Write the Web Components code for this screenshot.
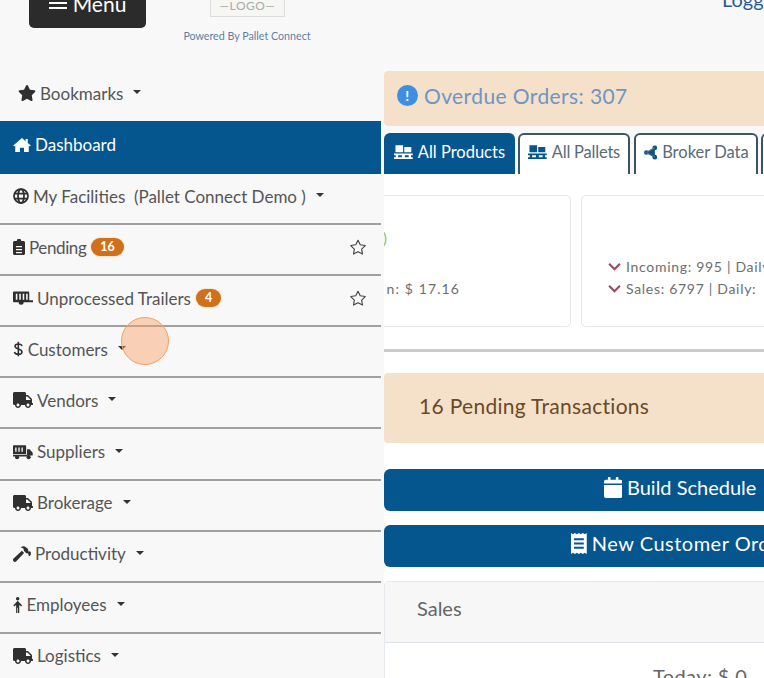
<!DOCTYPE html>
<html>
<head>
<meta charset="utf-8">
<title>Dashboard</title>
<style>
  html, body { margin: 0; height: 100%; overflow: hidden; background: #f8f8f9; }
  body { font-family: "Lato", "Open Sans", sans-serif; color: #555; }
</style>
</head>
<body>
<template id="icons">
  <svg data-i="star" viewBox="0 0 576 512"><path d="M259.3 17.8L194 150.2 47.9 171.5c-26.2 3.8-36.7 36.1-17.7 54.6l105.7 103-25 145.5c-4.5 26.3 23.2 46 46.4 33.7L288 439.6l130.7 68.7c23.2 12.2 50.9-7.4 46.4-33.7l-25-145.5 105.7-103c19-18.5 8.5-50.8-17.7-54.6L382 150.2 316.7 17.8c-11.7-23.6-45.6-23.9-57.4 0z"/></svg>
  <svg data-i="star-o" viewBox="0 0 576 512"><path fill="none" stroke="currentColor" stroke-width="36" stroke-linejoin="round" d="M288 40l72 146 161 23-116 113 27 160-144-76-144 76 27-160L55 209l161-23z"/></svg>
  <svg data-i="home" viewBox="0 0 576 512"><path d="M288 32L8 270l26 30 38-32v212h152V340h128v140h152V268l38 32 26-30-96-82V64h-70v74z"/></svg>
  <svg data-i="globe" viewBox="0 0 512 512"><circle cx="256" cy="256" r="224" fill="none" stroke="currentColor" stroke-width="56"/><ellipse cx="256" cy="256" rx="96" ry="224" fill="none" stroke="currentColor" stroke-width="56"/><path stroke="currentColor" stroke-width="56" d="M40 176h432M40 336h432"/></svg>
  <svg data-i="clipboard" viewBox="0 0 384 512"><path fill-rule="evenodd" d="M48 64h72a72 72 0 0 1 144 0h72c26 0 48 22 48 48v352c0 26-22 48-48 48H48c-26 0-48-22-48-48V112c0-26 22-48 48-48zM96 224v40h192v-40zm0 96v40h192v-40zm0 96v40h192v-40z"/></svg>
  <svg data-i="trailer" viewBox="0 0 640 512"><path fill-rule="evenodd" d="M40 48h440c22 0 40 18 40 40v240h120v64H340a80 80 0 0 1-160 0H40c-22 0-40-18-40-40V88c0-22 18-40 40-40zm50 70v190h50V118zm110 0v190h50V118zm110 0v190h50V118zm110 0v190h50V118z"/><circle cx="260" cy="396" r="52"/></svg>
  <svg data-i="dollar" viewBox="0 0 16 24"><path fill="none" stroke="currentColor" stroke-width="2.300" d="M13.500 7.500C13 5.500 11 4.500 8 4.500 5 4.500 3 6 3 8c0 5 10.500 3 10.500 8.500 0 2-2.200 3.500-5.500 3.500s-5.200-1.300-6-3.500M8 1v22"/></svg>
  <svg data-i="truck" viewBox="0 0 640 512"><path d="M624 352h-16V243.900c0-12.700-5.100-24.900-14.100-33.900L494 110.100c-9-9-21.200-14.100-33.900-14.100H416V48c0-26.500-21.500-48-48-48H48C21.500 0 0 21.500 0 48v320c0 26.500 21.500 48 48 48h16c0 53 43 96 96 96s96-43 96-96h128c0 53 43 96 96 96s96-43 96-96h48c8.800 0 16-7.200 16-16v-32c0-8.800-7.200-16-16-16zM160 464c-26.500 0-48-21.500-48-48s21.500-48 48-48 48 21.500 48 48-21.500 48-48 48zm320 0c-26.500 0-48-21.500-48-48s21.500-48 48-48 48 21.500 48 48-21.500 48-48 48zm80-208H416V144h44.100l99.900 99.900V256z"/></svg>
  <svg data-i="supplier" viewBox="0 0 640 512"><path fill-rule="evenodd" d="M30 40h360c17 0 30 13 30 30v250H0V70c0-17 13-30 30-30zm40 70v140h44V110zm100 0v140h44V110zm100 0v140h44V110z"/><path d="M450 170h80l100 110v90H450zM0 340h450v60H0z"/><circle cx="130" cy="420" r="66"/><circle cx="500" cy="420" r="66"/></svg>
  <svg data-i="hammer" viewBox="0 0 576 512"><path d="M571 196l-23-23c-6-6-16-6-22 0l-11 12-29-29c6-23 0-48-17-66l-46-46C373-7 298-7 250 40l91 46v37c0 17 7 33 19 45l50 50c18 18 43 23 66 17l29 29-12 11c-6 6-6 16 0 22l23 23c6 6 16 6 22 0l33-52c6-6 6-16 0-22zM285 155L19 403c-25 24-26 63-1 88s64 24 88-1l248-266-38-38c-16-16-27-38-31-31z"/></svg>
  <svg data-i="male" viewBox="0 0 300 512"><circle cx="150" cy="56" r="56"/><path d="M150 116L10 270l34 30 56-50v262h40V340h20v172h40V250l56 50 34-30z"/></svg>
  <svg data-i="pallet" viewBox="0 0 640 512"><path d="M50 10h260v240H50zM350 70h240v180H350z"/><path fill-rule="evenodd" d="M0 290h640v60h-60v70h60v60H0v-60h60v-70H0zm140 60v70h130v-70zm230 0v70h130v-70z"/></svg>
  <svg data-i="share" viewBox="0 0 448 512"><circle cx="368" cy="96" r="80"/><circle cx="80" cy="256" r="80"/><circle cx="368" cy="416" r="80"/><path stroke="currentColor" stroke-width="44" d="M368 96L80 256l288 160"/></svg>
  <svg data-i="calendar" viewBox="0 0 448 512"><path d="M0 192h448v272c0 26-22 48-48 48H48c-26 0-48-22-48-48zM400 64h-48V16c0-9-7-16-16-16h-32c-9 0-16 7-16 16v48H160V16c0-9-7-16-16-16h-32c-9 0-16 7-16 16v48H48C22 64 0 86 0 112v48h448v-48c0-26-22-48-48-48z"/></svg>
  <svg data-i="receipt" viewBox="0 0 384 512"><path fill-rule="evenodd" d="M0 0l48 32L96 0l48 32 48-32 48 32 48-32 48 32 48-32v512l-48-32-48 32-48-32-48 32-48-32-48 32-48-32-48 32zM72 130v44h240v-44zm0 104v44h240v-44zm0 104v44h240v-44z"/></svg>
  <svg data-i="chevron" viewBox="0 0 24 16"><path fill="none" stroke="currentColor" stroke-width="4" d="M2 3l10 10L22 3"/></svg>
</template>

<app-shell>
  <top-bar slot="top"></top-bar>
  <side-nav slot="side">
    <nav-item icon="star" label="Bookmarks" caret plain></nav-item>
    <nav-item icon="home" label="Dashboard" active></nav-item>
    <nav-item icon="globe" label="My Facilities&nbsp; (Pallet Connect Demo )" caret></nav-item>
    <nav-item icon="clipboard" label="Pending" badge="16" fav tight></nav-item>
    <nav-item icon="trailer" label="Unprocessed Trailers" badge="4" fav></nav-item>
    <nav-item icon="dollar" label="Customers" caret></nav-item>
    <nav-item icon="truck" label="Vendors" caret></nav-item>
    <nav-item icon="supplier" label="Suppliers" caret></nav-item>
    <nav-item icon="truck" label="Brokerage" caret></nav-item>
    <nav-item icon="hammer" label="Productivity" caret></nav-item>
    <nav-item icon="male" label="Employees" caret></nav-item>
    <nav-item icon="truck" label="Logistics" caret></nav-item>
  </side-nav>
  <dash-main slot="main"></dash-main>
</app-shell>

<script>
(function() {
    'use strict';

    var ICONS = document.getElementById('icons').content;
    var BLUE = '#05558f';

    function iconMarkup(name) {
        var svg = ICONS.querySelector('[data-i="' + name + '"]');
        return svg ? svg.outerHTML : '';
    }

    function define(tag, css, html) {
        customElements.define(tag, class extends HTMLElement {
            constructor() {
                super();
                this.attachShadow({ mode: 'open' });
            }
            connectedCallback() {
                var markup = typeof html === 'function' ? html(this) : html;
                this.shadowRoot.innerHTML = '<style>' + css + '</style>' + markup;
            }
        });
    }

    define('app-shell', [
        ':host { display: block; position: relative; width: 764px; height: 678px; overflow: hidden; background: #f8f8f9; }',
        '.top { height: 71px; display: flow-root; }',
        '.cols { display: grid; grid-template-columns: 384px 592px; }',
        '.spot { position: absolute; left: 121px; top: 317px; width: 48px; height: 48px; box-sizing: border-box;',
        '  border-radius: 50%; background: rgba(250,160,100,.45); border: 1.5px solid #f5a060; }'
    ].join('\n'), [
        '<div class="top"><slot name="top"></slot></div>',
        '<div class="cols"><slot name="side"></slot><slot name="main"></slot></div>',
        '<div class="spot"></div>'
    ].join(''));

    define('top-bar', [
        ':host { display: block; position: relative; height: 71px; margin-top: -22px; }',
        '.row { display: grid; grid-template-columns: 29px 117px 64px 75px 1fr auto; height: 50px; }',
        '.menu { grid-column: 2; display: flex; align-items: center; justify-content: center; gap: 6px; height: 50px;',
        '  background: #2b2b2b; color: #fff; border-radius: 5px; font-size: 21px; }',
        '.bars { width: 18px; height: 11px; border-top: 2px solid #fff; border-bottom: 2px solid #fff; position: relative; box-sizing: border-box; }',
        '.bars::after { content: ""; position: absolute; left: 0; right: 0; top: 2.5px; height: 2px; background: #fff; }',
        '.logo { grid-column: 4; height: 39px; box-sizing: border-box; border: 1px solid #dcdcd8; border-top: 0; background: #f6f6f3;',
        '  color: #aaa; font-size: 12px; letter-spacing: .5px; display: flex; align-items: flex-end; justify-content: center; padding-bottom: 3px; }',
        '.login { grid-column: 6; font-size: 20px; color: #2a5d93; margin-top: 9px; white-space: nowrap; width: 42px; overflow: hidden; }',
        '.powered { position: absolute; left: 170px; width: 154px; top: 51px; text-align: center; font-size: 10.700px; color: #5d7fa6; white-space: nowrap; }'
    ].join('\n'), [
        '<div class="row">',
        '<div class="menu"><span class="bars"></span><span>Menu</span></div>',
        '<div class="logo">\u2014LOGO\u2014</div>',
        '<div class="login">Logged</div>',
        '</div>',
        '<div class="powered">Powered By Pallet Connect</div>'
    ].join(''));

    define('side-nav', ':host { display: block; width: 381px; } ', '<slot></slot>');

    define('nav-item', [
        ':host { display: block; }',
        '.item { display: flex; align-items: center; height: 44.100px; padding: 0 14px 5px 13px;',
        '  color: #555; font-size: 17px; border-bottom: 2px solid #a0a0a0; white-space: nowrap; }',
        '.item svg { height: 16px; width: auto; fill: currentColor; margin-right: 4px; color: #2f2f2f; flex: none; }',
        '.caret { width: 0; height: 0; margin-left: 10px; margin-bottom: 2px; border: 4.500px solid transparent; border-top-color: #333; border-bottom: 0; }',
        '.badge { margin-left: 5px; background: #d0701c; color: #fff; font-size: 12.500px; font-weight: 700; line-height: 1; padding: 3px 9px; border-radius: 10px; box-shadow: 0 0 2px #f5c08a; }',
        '.fav { margin-left: auto; display: flex; }',
        '.fav svg { height: 16px; margin: 0; color: #444; }',
        '.tight { letter-spacing: -.4px; }',
        '.plain { border-bottom: 0; padding: 0 14px 6px 18px; height: 44px; }',
        '.active { background: ' + BLUE + '; color: #fff; height: 47px; padding-bottom: 6px; border-bottom: 0; }',
        '.active svg { color: #fff; }'
    ].join('\n'), function(el) {
        var cls = el.hasAttribute('plain') ? 'plain' : el.hasAttribute('active') ? 'active' : '';
        return '<div class="item ' + cls + '">' +
            iconMarkup(el.getAttribute('icon')) +
            '<span' + (el.hasAttribute('tight') ? ' class="tight"' : '') + '>' + el.getAttribute('label') + '</span>' +
            (el.hasAttribute('caret') ? '<i class="caret"></i>' : '') +
            (el.hasAttribute('badge') ? '<span class="badge">' + el.getAttribute('badge') + '</span>' : '') +
            (el.hasAttribute('fav') ? '<span class="fav">' + iconMarkup('star-o') + '</span>' : '') +
            '</div>';
    });

    define('dash-main', [
        ':host { display: block; width: 592px; background: #fff; min-height: 610px; overflow: hidden; }',
        '.alert { background: #f5e1ca; border-radius: 4px; display: flex; align-items: center; box-sizing: border-box; }',
        '.over { height: 55px; padding: 0 0 7px 13px; gap: 6px; color: #6f95c2; font-size: 21px; letter-spacing: .4px; }',
        '.dot { width: 21px; height: 21px; border-radius: 50%; background: #3f8ee0; color: #fff; font-size: 14px; font-weight: 700; display: flex; align-items: center; justify-content: center; }',
        '.band { background: #f8f8f9; padding-top: 7px; }',
        '.tabs { display: flex; gap: 3px; height: 41px; }',
        '.tab { flex: none; box-sizing: border-box; display: flex; align-items: center; gap: 5px; padding: 0 0 5px 8px; font-size: 16.500px; color: #5a6a78; background: #fff;',
        '  border: 2px solid #3d5563; border-bottom: 0; border-radius: 6px 6px 0 0; white-space: nowrap; }',
        '.tab svg { height: 15px; width: auto; fill: ' + BLUE + '; }',
        '.tab.on { background: ' + BLUE + '; border-color: ' + BLUE + '; color: #fff; }',
        '.tab.on svg { fill: #fff; }',
        '.cards { display: flex; gap: 10px; margin: 21px 0 0 -60px; }',
        '.card { flex: none; box-sizing: border-box; height: 132px; width: 247px; border: 1px solid #e6e6e6; border-radius: 5px; font-size: 14px; letter-spacing: .7px; color: #6e6e6e; position: relative; display: flex; flex-direction: column; justify-content: flex-end; padding: 0 0 29px 26px; gap: 5px; white-space: nowrap; overflow: hidden; }',
        '.card.a { align-items: flex-end; padding-right: 110px; letter-spacing: 1.100px; }',
        '.card.a b { color: #8fc06a; font-weight: 400; position: absolute; right: 182px; top: 32px; font-size: 16px; }',
        '.card.b { width: 320px; }',
        '.stat { display: flex; align-items: center; gap: 5px; }',
        '.stat svg { width: 13px; height: 9px; color: #a5485f; flex: none; }',
        'hr { border: 0; height: 3px; background: #ccc; margin: 22px 0 21px; }',
        '.pend { height: 70px; padding: 0 0 6px 35px; font-size: 21px; color: #6a4a26; letter-spacing: .3px; }',
        '.btn { display: flex; align-items: center; justify-content: center; gap: 5px; box-sizing: border-box; background: ' + BLUE + '; color: #fff; height: 42px; padding-bottom: 6px; border-radius: 6px; font-size: 20px; white-space: nowrap; }',
        '.btn svg { height: 21px; width: auto; fill: #fff; }',
        '.b1 { margin-top: 26px; }',
        '.b2 { margin-top: 14px; letter-spacing: .5px; }',
        '.sales { margin-top: 14px; border: 1px solid #e6e9ee; border-radius: 4px 4px 0 0; }',
        '.sales .hd { box-sizing: border-box; height: 61px; padding: 0 0 8px 32px; background: #f7f7f7; border-bottom: 1px solid #dfe3e8; display: flex; align-items: center; font-size: 20px; color: #666; }',
        '.sales .bd { height: 60px; padding: 21px 0 0 268px; font-size: 20px; color: #666; letter-spacing: .4px; white-space: nowrap; }'
    ].join('\n'), [
        '<div class="alert over"><span class="dot">!</span><span>Overdue Orders: 307</span></div>',
        '<div class="band"><div class="tabs">',
        '<div class="tab on" style="width:131px">' + iconMarkup('pallet') + 'All Products</div>',
        '<div class="tab" style="width:112px;letter-spacing:-.2px">' + iconMarkup('pallet') + 'All Pallets</div>',
        '<div class="tab" style="width:124px;margin-left:1px">' + iconMarkup('share') + 'Broker Data</div>',
        '<div class="tab" style="width:20px"></div>',
        '</div></div>',
        '<div class="cards">',
        '<div class="card a"><b>)</b><span>n: $ 17.16</span></div>',
        '<div class="card b">',
        '<div class="stat">' + iconMarkup('chevron') + 'Incoming: 995 | Daily</div>',
        '<div class="stat">' + iconMarkup('chevron') + 'Sales: 6797 | Daily:</div>',
        '</div></div>',
        '<hr>',
        '<div class="alert pend">16 Pending Transactions</div>',
        '<div class="btn b1">' + iconMarkup('calendar') + 'Build Schedule</div>',
        '<div class="btn b2">' + iconMarkup('receipt') + 'New Customer Order</div>',
        '<div class="sales"><div class="hd">Sales</div><div class="bd">Today: $ 0</div></div>'
    ].join(''));
})();
</script>
</body>
</html>
